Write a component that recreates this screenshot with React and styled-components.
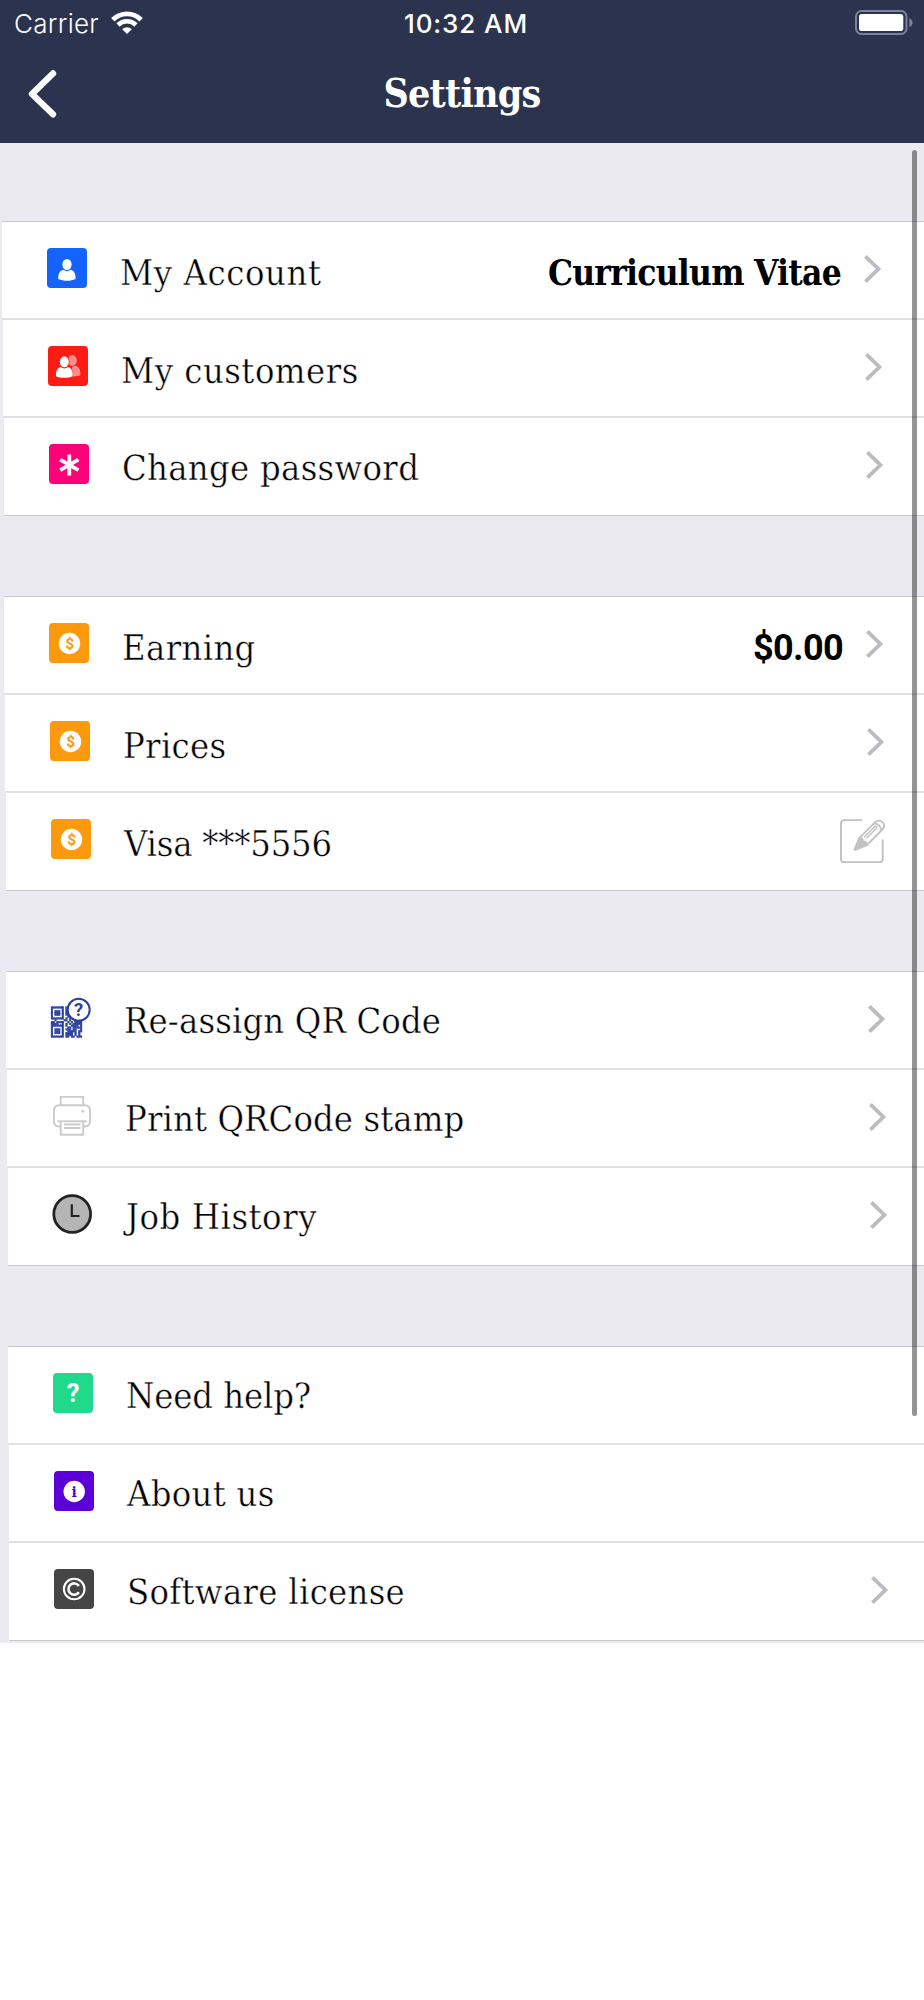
import React from "react";
import styled, { createGlobalStyle } from "styled-components";

const EstiloGlobal = createGlobalStyle`
  body {
    margin: 0;
    background: #ffffff;
    color: #000000;
  }
`;

const Pantalla = styled.div`
  position: relative;
  width: 924px;
  min-height: 2000px;
  overflow: hidden;
  background: #ffffff;
`;

const Cabecera = styled.header`
  height: 143px;
  background: #2b334f;
  color: #ffffff;
`;

const BarraEstado = styled.div`
  display: grid;
  grid-template-columns: 1fr auto 1fr;
  height: 46px;
  padding: 0 11px 0 14px;
  font-family: Inter, "Liberation Sans", sans-serif;
  font-size: 26px;
  line-height: 48px;
`;

const Operador = styled.div`
  display: flex;
  align-items: flex-start;
  gap: 12px;
  font-weight: 300;
  letter-spacing: 0.3px;

  svg {
    margin-top: 11px;
  }
`;

const Hora = styled.div`
  padding-left: 5px;
  font-weight: 500;
  letter-spacing: 0.9px;
`;

const Bateria = styled.div`
  display: flex;
  justify-content: flex-end;
  padding-top: 10px;
`;

const BarraTitulo = styled.div`
  display: grid;
  grid-template-columns: 1fr auto 1fr;
  padding-left: 28px;
  padding-right: 28px;
`;

const BotonAtras = styled.button`
  justify-self: start;
  height: 48px;
  margin-top: 24px;
  padding: 0;
  border: none;
  background: none;
  color: inherit;
  cursor: pointer;
`;

const Titulo = styled.h1`
  margin: 24px 0 0;
  font-family: "Roboto Slab", "DejaVu Serif Condensed", "DejaVu Serif", serif;
  font-size: 39px;
  line-height: 46px;
  font-weight: 700;
  letter-spacing: -0.75px;
`;

const Lista = styled.main`
  display: flex;
  flex-direction: column;
  gap: 80px;
  padding: 78px 0 2px;
  overflow: hidden;
  background: #ebeaf0;
`;

const Seccion = styled.section`
  display: flex;
  flex-direction: column;
`;

const Fila = styled.div`
  display: flex;
  align-items: flex-start;
  box-sizing: border-box;
  flex: none;
  width: 922px;
  height: 98px;
  margin-left: ${(props) => props.$sangria}px;
  padding: 0 42px 0 45px;
  background: #ffffff;
  border-bottom: 2px solid #e1e1e2;

  &:first-child {
    height: 99px;
    border-top: 1px solid #c8c7cc;
  }

  &:last-child {
    border-bottom: 1px solid #c8c7cc;
  }
`;

const Icono = styled.div`
  flex: none;
  width: 40px;
  height: 40px;
  margin-top: 26px;
  border-radius: 4px;
  background: ${(props) => props.$fondo || "transparent"};

  svg {
    display: block;
    overflow: visible;
  }
`;

const Etiqueta = styled.div`
  flex: 1;
  margin: ${(props) => props.$arriba}px 0 0 33px;
  font-family: "Roboto Slab", "DejaVu Serif Condensed", "DejaVu Serif", serif;
  font-size: 36px;
  line-height: 42px;
  font-weight: 300;
  letter-spacing: ${(props) => props.$espacio}px;
  white-space: nowrap;
  -webkit-text-stroke: 0.4px #ffffff;
`;

const Valor = styled.div`
  margin: 30px 23px 0 0;
  font-family: ${(props) =>
    props.$numero
      ? "Roboto, sans-serif"
      : '"Roboto Slab", "DejaVu Serif Condensed", "DejaVu Serif", serif'};
  font-size: ${(props) => (props.$numero ? 36 : 35)}px;
  line-height: 42px;
  font-weight: 700;
  letter-spacing: ${(props) => (props.$numero ? -0.6 : -0.75)}px;
  white-space: nowrap;
`;

const Flecha = styled.svg`
  flex: none;
  margin-top: 33px;
`;

const Editar = styled.svg`
  flex: none;
  margin: 26px 1px 0 0;
`;

const BarraDesplazamiento = styled.div`
  position: absolute;
  top: 150px;
  left: 912px;
  width: 5px;
  height: 1266px;
  border-radius: 3px;
  background: rgba(0, 0, 0, 0.42);
`;

const IconoPersona = () => (
  <svg width="40" height="40" viewBox="0 0 40 40" fill="#ffffff">
    <ellipse cx="20" cy="16.5" rx="4.6" ry="5.6" />
    <path d="M11.3 31C11 26 12.5 23 16.3 21.8C18.5 23.6 21.5 23.6 23.7 21.8C27.5 23 28.8 26 28.5 31C24 33.4 16 33.4 11.3 31Z" />
  </svg>
);

const IconoClientes = () => (
  <svg width="40" height="40" viewBox="0 0 40 40" fill="#ffffff">
    <g opacity="0.5">
      <ellipse cx="24.3" cy="14.5" rx="4.5" ry="5.4" />
      <path d="M24 20.8L28 19.8C31.6 21.5 32.6 24.5 32.3 29C30 30.2 27 30.6 24.8 30.4Z" />
    </g>
    <ellipse cx="16.3" cy="15.8" rx="5.2" ry="6.3" fill="#fc1c14" />
    <ellipse cx="16.3" cy="15.8" rx="4.5" ry="5.5" />
    <path d="M8 30.2C7.7 25.3 9 22.3 12.7 21.1C14.8 22.9 17.8 22.9 20 21.1C23.7 22.3 24.9 25.3 24.6 30.2C20 32.3 12.5 32.3 8 30.2Z" />
  </svg>
);

const IconoClave = () => (
  <svg width="40" height="40" viewBox="0 0 40 40" stroke="#ffffff" strokeWidth="3.8">
    <path d="M20.3 10.5V31.5M11.2 15.6L29.4 26.2M29.4 15.6L11.2 26.2" />
  </svg>
);

const IconoDinero = () => (
  <svg width="40" height="40" viewBox="0 0 40 40">
    <circle cx="20.5" cy="20.5" r="10.7" fill="#ffffff" />
    <text x="20.6" y="26.2" textAnchor="middle" fill="#fd990d" fontFamily="Roboto, sans-serif" fontWeight="700" fontSize="15.5">
      $
    </text>
  </svg>
);

const modulosQR = [
  "1111111.111......",
  "1.....1.111......",
  "1.111.1.111......",
  "1.111.1.1.1......",
  "1.111.1.11.1.....",
  "1.....1..111.....",
  "1111111.1.1.111..",
  "..1....11.1..1.11",
  "11.1111..1.1.1111",
  "1111..1.1.1.11111",
  "1111111.1..1111.1",
  "1.....1..11.11111",
  "1.111.1.111.11..1",
  "1.111.1..11111.11",
  "1.111.1.1111.1.1.",
  "1.....1.1111.1.1.",
  "1111111.11.11.111",
];

const IconoQR = () => (
  <svg width="40" height="40" viewBox="0 0 40 40">
    <g transform="translate(0 8.6) scale(1.82)" fill="#2a3f9e" stroke="#2a3f9e" strokeWidth="0.12">
      {modulosQR.map((fila, y) =>
        fila.split("").map((m, x) =>
          m === "1" ? <rect key={`${x}-${y}`} x={x} y={y} width="1.04" height="1.04" /> : null
        )
      )}
    </g>
    <circle cx="27.7" cy="11.8" r="11" fill="#ffffff" stroke="#2a3f9e" strokeWidth="2" />
    <text x="27.7" y="18.2" textAnchor="middle" fill="#2a3f9e" fontFamily="Roboto, sans-serif" fontWeight="700" fontSize="18.5">
      ?
    </text>
  </svg>
);

const IconoImpresora = () => (
  <svg width="40" height="40" viewBox="0 0 40 40" fill="none" stroke="#cbcbcb" strokeWidth="1.9">
    <path d="M8.7 9V0.9H31.2V9" />
    <path d="M8.7 30.5H7.5C4 30.5 1.9 28.3 1.9 25V14.5C1.9 11.2 4 9.2 7.5 9.2H32.4C36 9.2 38 11.2 38 14.5V25C38 28.3 36 30.5 32.4 30.5H31.2" />
    <path d="M5.5 25.3H34.7" />
    <path d="M8.7 25.3V38.8H31.2V25.3" />
    <path d="M12 28.5H28.5M12 32H28.5" />
    <circle cx="30.8" cy="15.3" r="1.4" fill="#cbcbcb" stroke="none" />
  </svg>
);

const IconoReloj = () => (
  <svg width="40" height="40" viewBox="0 0 40 40" fill="none" stroke="#222222">
    <circle cx="19.2" cy="20" r="18.4" fill="#b5b5b5" strokeWidth="2.8" />
    <path d="M18.8 10.3V22H26.5" strokeWidth="2.2" />
  </svg>
);

const IconoAyuda = () => (
  <svg width="40" height="40" viewBox="0 0 40 40">
    <text x="20" y="29" textAnchor="middle" fill="#ffffff" fontFamily="Roboto, sans-serif" fontWeight="700" fontSize="25.5">
      ?
    </text>
  </svg>
);

const IconoInfo = () => (
  <svg width="40" height="40" viewBox="0 0 40 40">
    <circle cx="20.2" cy="20.5" r="10.7" fill="#ffffff" />
    <text x="20.2" y="26" textAnchor="middle" fill="#5c00d8" fontFamily="DejaVu Serif Condensed, serif" fontWeight="700" fontSize="15.5">
      i
    </text>
  </svg>
);

const IconoLicencia = () => (
  <svg width="40" height="40" viewBox="0 0 40 40" fill="none" stroke="#ffffff">
    <circle cx="20.2" cy="20" r="10.3" strokeWidth="2.1" />
    <path d="M24.9 16.9A5.7 5.7 0 1 0 24.9 23.3" strokeWidth="2.6" />
  </svg>
);

const IconoEditar = () => (
  <Editar width="45" height="44" viewBox="0 0 45 44" fill="none" stroke="#c2c2c2" strokeWidth="1.9">
    <path d="M22 1.1H4.5C2.2 1.1 1 2.3 1 4.5V40C1 42.2 2.2 43.3 4.5 43.3H39.4C41.6 43.3 42.7 42.2 42.7 40V20.5" />
    <path d="M19.2 19.2L35.5 2.9C39.8 -1.3 47 5.5 42.8 10L26.5 26.3" />
    <path d="M34.2 4.2C37.5 4.2 41.2 7.8 41.4 11.4" />
    <path d="M26.5 19.2L36 9.7M36 9.7C37.6 7.9 36 6.4 34.3 8L24 18.3" strokeWidth="1.5" />
    <path d="M19.2 19.2C21.5 18.7 22.7 19.7 23 22.1C25.6 22.2 27 23.5 26.5 26.3L15 31L14.5 30.5Z" fill="#c2c2c2" />
  </Editar>
);

const secciones = [
  [
    { texto: "My Account", icono: <IconoPersona />, fondo: "#1463fe", sangria: 2, espacio: 0.6, arriba: 30, valor: "Curriculum Vitae", accion: "flecha" },
    { texto: "My customers", icono: <IconoClientes />, fondo: "#fc1c14", sangria: 3, espacio: 0.5, arriba: 30, accion: "flecha" },
    { texto: "Change password", icono: <IconoClave />, fondo: "#ff0078", sangria: 4, espacio: 0.3, arriba: 29, accion: "flecha" },
  ],
  [
    { texto: "Earning", icono: <IconoDinero />, fondo: "#fd990d", sangria: 4, espacio: 0.35, arriba: 30, valor: "$0.00", numero: true, accion: "flecha" },
    { texto: "Prices", icono: <IconoDinero />, fondo: "#fd990d", sangria: 5, espacio: 0.3, arriba: 30, accion: "flecha" },
    { texto: "Visa ***5556", icono: <IconoDinero />, fondo: "#fd990d", sangria: 6, espacio: -0.2, arriba: 30, accion: "editar" },
  ],
  [
    { texto: "Re-assign QR Code", icono: <IconoQR />, sangria: 6, espacio: 0.15, arriba: 28, accion: "flecha" },
    { texto: "Print QRCode stamp", icono: <IconoImpresora />, sangria: 7, espacio: 0.1, arriba: 28, accion: "flecha" },
    { texto: "Job History", icono: <IconoReloj />, sangria: 8, espacio: 0.55, arriba: 28, accion: "flecha" },
  ],
  [
    { texto: "Need help?", icono: <IconoAyuda />, fondo: "#20da8c", sangria: 8, espacio: -0.1, arriba: 28 },
    { texto: "About us", icono: <IconoInfo />, fondo: "#5c00d8", sangria: 9, espacio: 0.3, arriba: 28 },
    { texto: "Software license", icono: <IconoLicencia />, fondo: "#454545", sangria: 9, espacio: 0.3, arriba: 28, accion: "flecha" },
  ],
];

const Settings = () => {
  return (
    <>
      <EstiloGlobal />
      <Pantalla>
        <Cabecera>
          <BarraEstado>
            <Operador>
              Carrier
              <svg width="32" height="24" viewBox="0 0 32 24" fill="none" stroke="#ffffff">
                <path d="M1.8 8.8A20 20 0 0 1 30.2 8.8" strokeWidth="4.8" />
                <path d="M7 14A12.8 12.8 0 0 1 25 14" strokeWidth="4.6" />
                <path d="M16 23L11.2 18.2A6.8 6.8 0 0 1 20.8 18.2Z" fill="#ffffff" stroke="none" />
              </svg>
            </Operador>
            <Hora>10:32 AM</Hora>
            <Bateria>
              <svg width="58" height="25" viewBox="0 0 58 25">
                <rect x="1" y="1" width="50.5" height="23" rx="5.5" fill="none" stroke="#7d839a" strokeWidth="2" />
                <rect x="4" y="4" width="44.3" height="17" rx="2.8" fill="#ffffff" />
                <path d="M54.3 8.3C58.6 10 58.6 15.5 54.3 17.2Z" fill="#7d839a" />
              </svg>
            </Bateria>
          </BarraEstado>
          <BarraTitulo>
            <BotonAtras aria-label="Back">
              <svg width="29" height="48" viewBox="0 0 29 48" fill="none" stroke="#ffffff" strokeWidth="6.4" strokeLinecap="round" strokeLinejoin="round">
                <path d="M25 3.5L4 24L25 44.3" />
              </svg>
            </BotonAtras>
            <Titulo>Settings</Titulo>
          </BarraTitulo>
        </Cabecera>

        <Lista>
          {secciones.map((filas, i) => (
            <Seccion key={i}>
              {filas.map((fila) => (
                <Fila key={fila.texto} $sangria={fila.sangria}>
                  <Icono $fondo={fila.fondo}>{fila.icono}</Icono>
                  <Etiqueta $espacio={fila.espacio} $arriba={fila.arriba}>
                    {fila.texto}
                  </Etiqueta>
                  {fila.valor && <Valor $numero={fila.numero}>{fila.valor}</Valor>}
                  {fila.accion === "flecha" && (
                    <Flecha width="18" height="28" viewBox="0 0 18 28" fill="none" stroke="#bcbbc2" strokeWidth="3.8">
                      <path d="M1.4 1.4L14.4 14L1.4 26.6" />
                    </Flecha>
                  )}
                  {fila.accion === "editar" && <IconoEditar />}
                </Fila>
              ))}
            </Seccion>
          ))}
        </Lista>
        <BarraDesplazamiento />
      </Pantalla>
    </>
  );
};

export default Settings;
